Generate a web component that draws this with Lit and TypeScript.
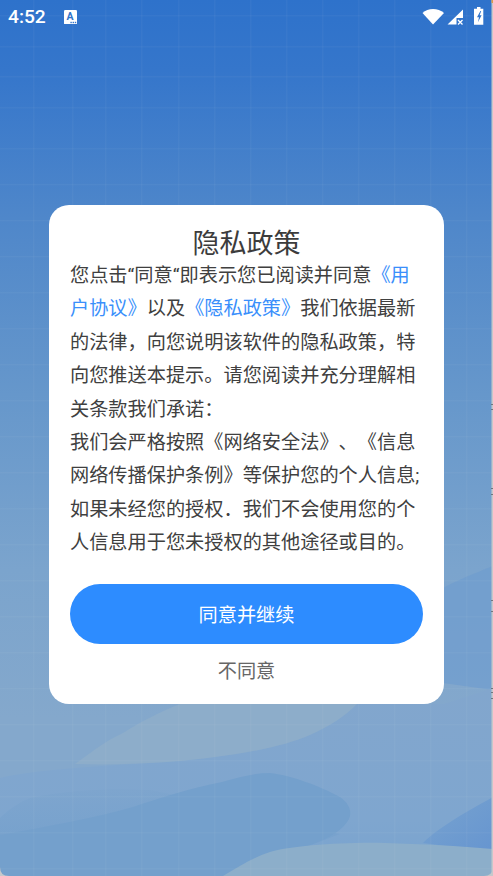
import { LitElement, html, css, svg } from "lit";
import { customElement } from "lit/decorators.js";

const gridX = [33, 72, 105, 141, 178, 214, 250, 286, 322, 358, 394, 430, 466];
const gridY = [15, 46, 76, 107, 148, 184, 220, 256, 292, 328, 364, 400, 436, 472, 508, 544, 580, 616, 652, 688, 724, 760, 796, 832, 868];
const ticks: number[] = [404, 409, 488, 494, 600, 611, 688, 692, 698];

const background = svg`
  <svg class="bg" viewBox="0 0 493 876" preserveAspectRatio="none" aria-hidden="true">
    <defs>
      <linearGradient id="sky" x1="0" y1="0" x2="0" y2="1">
        <stop offset="0" stop-color="#2e72cb"/>
        <stop offset="0.08" stop-color="#3576cb"/>
        <stop offset="0.25" stop-color="#4f87ca"/>
        <stop offset="0.45" stop-color="#6697cb"/>
        <stop offset="0.65" stop-color="#7ba4cd"/>
        <stop offset="0.82" stop-color="#84a8cc"/>
        <stop offset="1" stop-color="#84a8cc"/>
      </linearGradient>
      <linearGradient id="lower" x1="0" y1="0" x2="0" y2="1">
        <stop offset="0" stop-color="#82a6cd"/>
        <stop offset="0.7" stop-color="#7fa6cf"/>
        <stop offset="1" stop-color="#78a3cf"/>
      </linearGradient>
      <linearGradient id="band" x1="0" y1="0" x2="0" y2="1">
        <stop offset="0" stop-color="#7ca4cd"/>
        <stop offset="0.45" stop-color="#74a0cc"/>
        <stop offset="1" stop-color="#729ecb"/>
      </linearGradient>
      <linearGradient id="corner" x1="0" y1="0" x2="1" y2="1">
        <stop offset="0" stop-color="#78a3cf"/>
        <stop offset="1" stop-color="#6695d0"/>
      </linearGradient>
    </defs>
    <rect width="493" height="876" fill="url(#sky)"/>
    <path d="M443 588 C460 579 475 573 493 566 V690 L443 683 Z" fill="#6f9cce" opacity="0.7"/>
    <path d="M0 778 C30 770 100 766 167 762 C230 757 280 748 310 735 C330 726 345 716 357 704 H444 L493 688 V876 H0 Z" fill="url(#lower)"/>
    <path d="M75 764 C92 752 105 741 123 733 C140 722 160 712 180 704 H357 C345 716 330 726 310 735 C280 748 230 757 167 762 C135 764 105 765 75 764 Z" fill="#8dadca"/>
    <path d="M0 818 C8 810 18 803 30 798 C70 790 110 788 150 790 C200 800 280 820 340 834 C300 850 250 866 223 876 H0 Z" fill="url(#band)" opacity="0.55"/>
    <path d="M0 835 C50 826 95 818 133 807 C160 798 190 788 222 782 C240 777 255 773 270 773 C290 775 320 786 340 797 C350 804 352 812 349 819 C343 830 330 838 310 845 L223 876 H0 Z" fill="#74a0cc"/>
    <path d="M423 843 C440 826 470 810 493 797 V852 Z" fill="url(#corner)"/>
    <path d="M223 876 C240 866 252 858 270 852 C290 846 340 842 385 843 C420 844 460 846 493 849 V876 Z" fill="#8caeca"/>
    ${gridX.map((x) => svg`<rect x=${x} y="0" width="1.5" height="876" fill="#fff" opacity="0.035"/>`)}
    ${gridY.map((y) => svg`<rect x="0" y=${y} width="493" height="1.5" fill="#fff" opacity="0.035"/>`)}
    <rect x="491.5" y="0" width="1.5" height="876" fill="#c6c8cb"/>
    <rect x="491.5" y="0" width="1.5" height="3" fill="#d99a4a"/>
    ${ticks.map((y) => svg`<rect x="491" y=${y} width="2" height="1" fill="#6f7780"/>`)}
    <path d="M0 867 Q0 876 9 876 H0 Z" fill="#c6c8cb"/>
    <path d="M493 868 Q492 876 484 876 H493 Z" fill="#c6c8cb"/>
  </svg>
`;

const statusIcons = svg`
  <svg class="status-icons" viewBox="420 4 66 24" aria-hidden="true">
    <path d="M422.5 13 C428 7.5 438 7.5 444 13 L433 24.5 Z" fill="#fff"/>
    <path d="M447.5 24.5 L463 9.5 V18 H456.5 V24.5 Z" fill="#fff"/>
    <path d="M458 20 L462.5 24.5 M462.5 20 L458 24.5" stroke="#fff" stroke-width="1.3" fill="none"/>
    <path d="M477 7 H480.5 V8.7 H483.3 V24.7 H474 V8.7 H477 Z" fill="#fff"/>
    <path d="M480.4 11 L477 17.2 H479 L477.9 22.2 L481.6 15.2 H479.6 L481.2 11 Z" fill="#2f73cb"/>
  </svg>
`;

const appIcon = svg`
  <svg class="app-icon" viewBox="0 0 13 14.5" aria-hidden="true">
    <rect width="13" height="14.5" rx="1.2" fill="#fff"/>
    <text x="6" y="10" text-anchor="middle" font-family="Roboto, sans-serif" font-size="10.5" font-weight="700" fill="#2f73cb">A</text>
    <rect x="6.4" y="11.8" width="1.4" height="1.4" fill="#2f73cb"/>
    <rect x="8.6" y="11.8" width="1.4" height="1.4" fill="#2f73cb"/>
    <rect x="10.8" y="11.8" width="1.4" height="1.4" fill="#2f73cb"/>
  </svg>
`;

@customElement("app-root")
export class AppRoot extends LitElement {
  static styles = css`
    :host {
      display: block;
      position: relative;
      width: 493px;
      height: 876px;
      overflow: hidden;
      font-family: Roboto, "Noto Sans CJK SC", sans-serif;
      text-spacing-trim: space-all;
      font-kerning: none;
    }
    .bg {
      position: absolute;
      inset: 0;
      width: 100%;
      height: 100%;
    }
    .page {
      position: relative;
      display: flex;
      flex-direction: column;
      height: 100%;
    }
    .status {
      display: flex;
      align-items: center;
      height: 34px;
      padding: 0 7px 0 8px;
      color: #fff;
    }
    .time {
      font-size: 19.2px;
      font-weight: 500;
      line-height: 34px;
    }
    .app-icon {
      flex: none;
      width: 13px;
      height: 14.5px;
      margin-left: 18px;
    }
    .status-icons {
      flex: none;
      width: 66px;
      height: 24px;
      margin-left: auto;
      margin-top: -2px;
    }
    .card {
      box-sizing: border-box;
      width: 395px;
      height: 499px;
      margin: 171px 0 0 49px;
      padding: 24px 21px 16px;
      background: #fff;
      border-radius: 20px;
      display: flex;
      flex-direction: column;
    }
    .title {
      margin: 0;
      font-size: 27px;
      font-weight: 400;
      line-height: 30px;
      text-align: center;
      color: #3c3c3c;
    }
    .body {
      margin: 0;
      font-size: 19.2px;
      line-height: 33.4px;
      color: #404040;
    }
    .link {
      color: #3a8ffb;
    }
    .agree {
      margin-top: 24px;
      height: 60px;
      border: 0;
      border-radius: 30px;
      background: #2d8cff;
      color: #fff;
      font: inherit;
      font-size: 19.2px;
      padding: 0;
    }
    .decline {
      margin-top: 11px;
      border: 0;
      background: none;
      color: #666;
      font: inherit;
      font-size: 19.2px;
      line-height: 33px;
      padding: 0;
    }
  `;

  render() {
    return html`
      ${background}
      <div class="page">
        <div class="status">
          <span class="time">4:52</span>
          ${appIcon}
          ${statusIcons}
        </div>
        <div class="card">
          <h1 class="title">隐私政策</h1>
          <p class="body">您点击“同意“即表示您已阅读并同意<span class="link">《用户协议》</span>以及<span class="link">《隐私政策》</span>我们依据最新的法律，向您说明该软件的隐私政策，特向您推送本提示。请您阅读并充分理解相关条款我们承诺：<br />我们会严格按照《网络安全法》、《信息网络传播保护条例》等保护您的个人信息;如果未经您的授权．我们不会使用您的个人信息用于您未授权的其他途径或目的。</p>
          <button class="agree">同意并继续</button>
          <button class="decline">不同意</button>
        </div>
      </div>
    `;
  }
}
